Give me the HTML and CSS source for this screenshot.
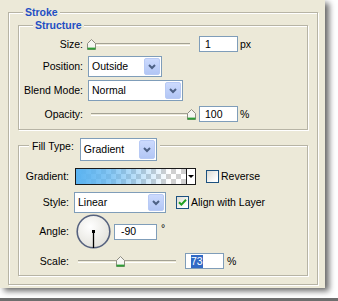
FILE: index.html
```html
<!DOCTYPE html>
<html>
<head>
<meta charset="utf-8">
<title>Stroke</title>
<link rel="stylesheet" href="styles.css">
</head>
<body>
<div class="panel">
  <fieldset class="group outer">
    <legend class="title">Stroke</legend>

    <fieldset class="group structure">
      <legend class="title">Structure</legend>

      <div class="row r-size">
        <span class="lbl">Size:</span>
        <div class="slider">
          <div class="track"></div>
          <svg class="thumb" style="left:0px" width="9" height="11" viewBox="0 0 9 11"><path d="M4.5 0.5 L8.5 4.5 V10.5 H0.5 V4.5 Z" fill="#F6F6F2" stroke="#8E8D82"/><rect x="0.5" y="8.6" width="8" height="2" fill="#2E9E35"/></svg>
        </div>
        <div class="num">1</div>
        <span class="unit">px</span>
      </div>

      <div class="row r-pos">
        <span class="lbl">Position:</span>
        <div class="combo w-pos">
          <span class="val">Outside</span>
          <span class="btn"><svg width="8" height="6" viewBox="0 0 8 6"><path d="M1 1 L4 4 L7 1" fill="none" stroke="#4D6185" stroke-width="2"/></svg></span>
        </div>
      </div>

      <div class="row r-blend">
        <span class="lbl">Blend Mode:</span>
        <div class="combo w-blend">
          <span class="val">Normal</span>
          <span class="btn"><svg width="8" height="6" viewBox="0 0 8 6"><path d="M1 1 L4 4 L7 1" fill="none" stroke="#4D6185" stroke-width="2"/></svg></span>
        </div>
      </div>

      <div class="row r-opac">
        <span class="lbl">Opacity:</span>
        <div class="slider">
          <div class="track"></div>
          <svg class="thumb" style="left:100px" width="9" height="11" viewBox="0 0 9 11"><path d="M4.5 0.5 L8.5 4.5 V10.5 H0.5 V4.5 Z" fill="#F6F6F2" stroke="#8E8D82"/><rect x="0.5" y="8.6" width="8" height="2" fill="#2E9E35"/></svg>
        </div>
        <div class="num">100</div>
        <span class="unit">%</span>
      </div>
    </fieldset>

    <fieldset class="group fill">
      <legend class="ft-legend">
        <div class="ft-row">
          <span class="ft-lbl">Fill Type:</span>
          <div class="combo w-ft">
            <span class="val">Gradient</span>
            <span class="btn"><svg width="8" height="6" viewBox="0 0 8 6"><path d="M1 1 L4 4 L7 1" fill="none" stroke="#4D6185" stroke-width="2"/></svg></span>
          </div>
        </div>
      </legend>

      <div class="row r-grad">
        <span class="lbl">Gradient:</span>
        <div class="swatch">
          <div class="grad"></div>
          <div class="drop"><span class="tri"></span></div>
        </div>
        <span class="check"></span>
        <span class="cklbl">Reverse</span>
      </div>

      <div class="row r-style">
        <span class="lbl">Style:</span>
        <div class="combo w-style">
          <span class="val">Linear</span>
          <span class="btn"><svg width="8" height="6" viewBox="0 0 8 6"><path d="M1 1 L4 4 L7 1" fill="none" stroke="#4D6185" stroke-width="2"/></svg></span>
        </div>
        <span class="check on"><svg width="11" height="11" viewBox="0 0 11 11"><path d="M2 5.2 L4.4 7.6 L9 2.8" fill="none" stroke="#21A121" stroke-width="2"/></svg></span>
        <span class="cklbl">Align with Layer</span>
      </div>

      <div class="row r-angle">
        <span class="lbl">Angle:</span>
        <svg class="dial" width="35" height="35" viewBox="0 0 35 35">
          <defs>
            <radialGradient id="dg" cx="40%" cy="35%" r="70%">
              <stop offset="0" stop-color="#FFFFFF"/>
              <stop offset="1" stop-color="#E2E1DA"/>
            </radialGradient>
          </defs>
          <circle cx="17.5" cy="17.5" r="16.3" fill="url(#dg)" stroke="#56627F" stroke-width="1.6"/>
          <line x1="17.5" y1="17.5" x2="17.5" y2="34" stroke="#000" stroke-width="1.3"/>
          <rect x="16" y="16" width="3" height="3" fill="#000"/>
        </svg>
        <div class="num w-angle">-90</div>
        <span class="deg">°</span>
      </div>

      <div class="row r-scale">
        <span class="lbl">Scale:</span>
        <div class="slider s-scale">
          <div class="track"></div>
          <svg class="thumb" style="left:42px" width="9" height="11" viewBox="0 0 9 11"><path d="M4.5 0.5 L8.5 4.5 V10.5 H0.5 V4.5 Z" fill="#F6F6F2" stroke="#8E8D82"/><rect x="0.5" y="8.6" width="8" height="2" fill="#2E9E35"/></svg>
        </div>
        <div class="num w-scale"><span class="sel">73</span></div>
        <span class="unit u-scale">%</span>
      </div>
    </fieldset>
  </fieldset>
</div>
<div class="rule"></div>
</body>
</html>
```

FILE: styles.css
```css
* { box-sizing: border-box; }
html, body { margin: 0; padding: 0; }
body {
  width: 338px;
  height: 301px;
  overflow: hidden;
  background: #ffffff;
  font-family: "Liberation Sans", Arial, sans-serif;
  font-size: 10.5px;
  line-height: 13px;
  color: #000;
}
.panel {
  width: 325px;
  height: 288px;
  background: #ECE9D8;
  padding: 6px 7px 4px 8px;
  box-shadow: 4px 3px 6px rgba(0, 0, 0, 0.6);
}
.group {
  margin: 0;
  padding: 0;
  min-width: 0;
  border: 1px solid #B7B4A5;
  box-shadow: 1px 1px 0 #fff, inset 1px 1px 0 #fff;
}
.outer { padding-bottom: 8px; }
.structure { margin: 0 9px; padding-bottom: 7px; }
.fill { margin: 8px 9px 0; padding-bottom: 6px; }

.title {
  margin-left: 14px;
  padding: 0 2px;
  line-height: 13px;
  font-weight: bold;
  color: #1F4FC4;
  background: #ECE9D8;
}

.row { display: flex; align-items: center; }
.lbl { flex: none; width: 64px; margin-right: 4px; text-align: right; white-space: nowrap; }
.fill .lbl { width: 50px; margin-right: 5px; }

.r-size { margin-top: 4px; height: 16px; }
.r-pos { margin-top: 4px; height: 21px; }
.r-blend { margin-top: 3px; height: 21px; }
.r-opac { margin-top: 5px; height: 16px; }

.r-grad { margin-top: 15px; height: 17px; }
.r-style { margin-top: 7px; height: 21px; }
.r-angle { margin-top: 1px; height: 35px; }
.r-scale { margin-top: 4px; height: 16px; }

/* slider */
.slider { position: relative; flex: none; width: 110px; height: 11px; }
.track {
  height: 3px;
  margin: 4px 7px 0 4px;
  border-top: 1px solid #A4A294;
  border-bottom: 1px solid #fff;
}
.thumb { position: absolute; top: 0; display: block; }
.s-scale { width: 108px; }
.s-scale .track { margin-right: 6px; }

/* numeric box */
.num {
  flex: none;
  width: 39px;
  height: 16px;
  margin-left: 2px;
  padding-left: 5px;
  border: 1px solid #7F9DB9;
  background: #fff;
  display: flex;
  align-items: center;
}
.unit { margin-left: 2px; }
.w-angle { width: 43px; margin-left: 3px; padding-left: 6px; }
.w-scale { margin-left: 3px; }
.u-scale { margin-left: 3px; }
.sel { background: #316AC5; color: #fff; }
.deg { align-self: flex-start; margin: 8px 0 0 4px; }

/* combo box */
.combo {
  flex: none;
  height: 21px;
  border: 1px solid #7F9DB9;
  background: #fff;
  display: flex;
  align-items: stretch;
  padding: 1px;
}
.combo .val { flex: 1; display: flex; align-items: center; padding-left: 2px; white-space: nowrap; }
.combo .btn {
  flex: none;
  width: 16px;
  border: 1px solid #B8CAF5;
  border-radius: 2px;
  background: linear-gradient(#CCDAFD, #B2C6F5);
  display: flex;
  align-items: center;
  justify-content: center;
}
.w-pos { width: 74px; margin-left: 1px; }
.w-blend { width: 95px; margin-left: 1px; }
.w-style { width: 92px; }
.w-ft { width: 77px; height: 23px; margin-left: 6px; margin-bottom: -9px; }

/* fill type legend */
.ft-legend { margin-left: 10px; padding: 0 3px; background: #ECE9D8; }
.ft-row { display: flex; align-items: flex-start; }
.ft-lbl { line-height: 14px; padding-top: 1px; }

/* gradient swatch */
.swatch {
  flex: none;
  width: 121px;
  height: 17px;
  margin-left: 1px;
  border: 1px solid #1A1A1A;
  display: flex;
}
.grad {
  flex: 1;
  background:
    linear-gradient(90deg, #5AB3F1 0%, rgba(90, 179, 241, 0.75) 30%, rgba(90, 179, 241, 0) 85%),
    conic-gradient(#D0D0D0 25%, #FFFFFF 0 50%, #D0D0D0 0 75%, #FFFFFF 0) 0 0 / 10px 10px;
}
.drop {
  flex: none;
  width: 9px;
  border-left: 1px solid #1A1A1A;
  background: #fff;
  display: flex;
  align-items: center;
  justify-content: center;
}
.tri {
  width: 0;
  height: 0;
  border-left: 3px solid transparent;
  border-right: 3px solid transparent;
  border-top: 3px solid #000;
}

/* checkbox */
.check {
  flex: none;
  width: 13px;
  height: 13px;
  margin-left: 10px;
  border: 1px solid #1C5180;
  background: linear-gradient(135deg, #DCDBD3, #FFFFFF 80%);
  display: flex;
  align-items: center;
  justify-content: center;
}
.cklbl { margin-left: 2px; white-space: nowrap; }

.dial { flex: none; display: block; margin-left: 2px; }

.rule { height: 3px; margin-top: 10px; background: #6E6E6E; }
```
